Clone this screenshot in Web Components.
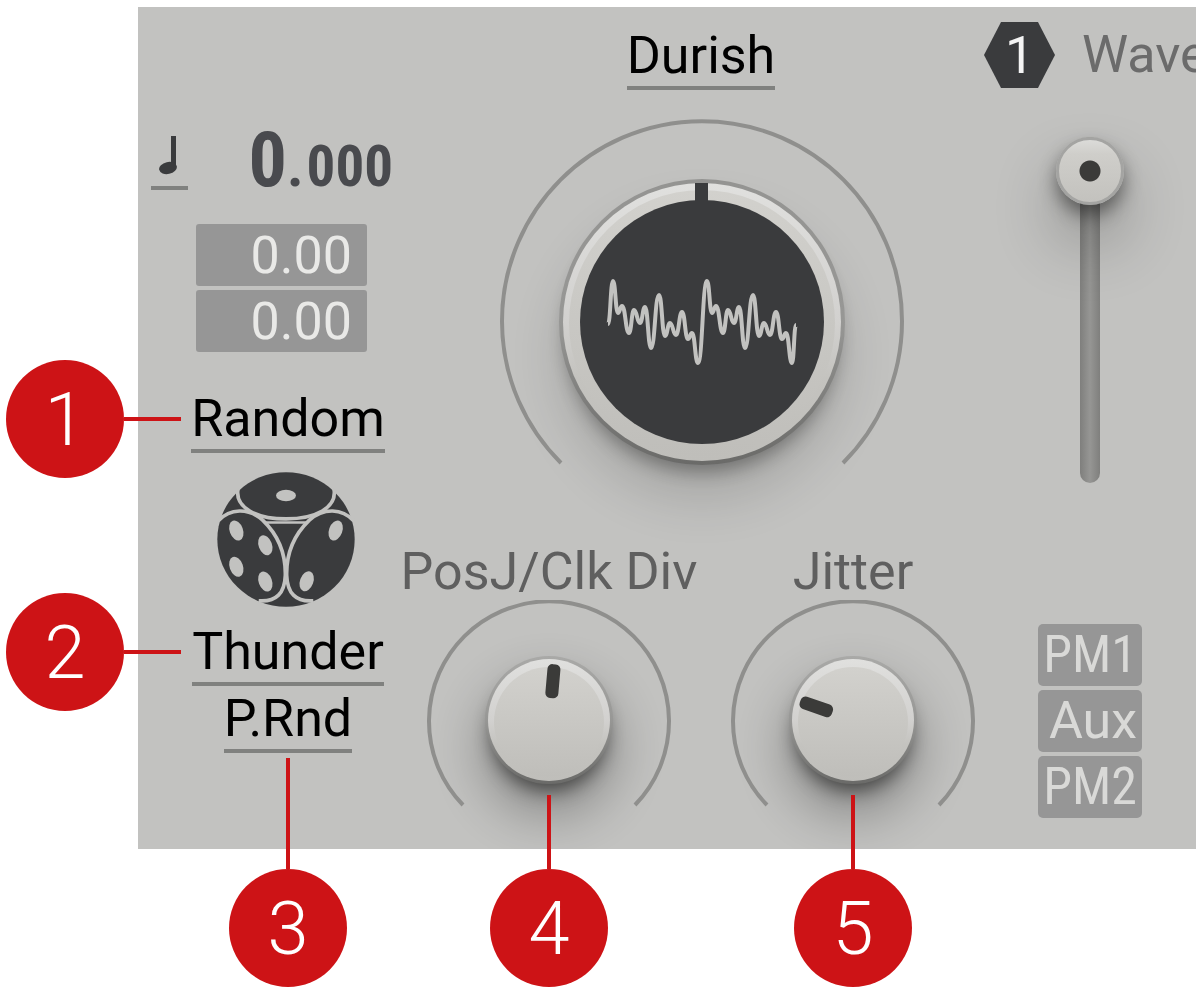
<!DOCTYPE html>
<html lang="en">
<head>
<meta charset="utf-8">
<title>Oscillator panel</title>
<style>
  body {
    margin: 0;
    padding: 7px 8px 143px 138px;
    background: #fff;
    font-family: Roboto, "Liberation Sans", sans-serif;
    font-size: 52px;
    color: #000;
  }
</style>
</head>
<body>
<osc-panel></osc-panel>

<script>
function define(name, html, setup) {
  const template = document.createElement('template');
  template.innerHTML = html;

  window.customElements.define(name, class extends HTMLElement {
    constructor() {
      super();
      this.attachShadow({ mode: 'open' });
      this.shadowRoot.appendChild(template.content.cloneNode(true));
    }

    connectedCallback() {
      if (setup) setup(this, this.shadowRoot);
    }
  });
}

// Underlined text that opens a menu
define('menu-button', `
  <style>
    :host {
      display: block;
    }

    button {
      display: block;
      margin: 0 auto;
      padding: 0;
      border: 0;
      border-bottom: 4px solid #80817f;
      background: none;
      font: inherit;
      line-height: 60px;
      color: #000;
      white-space: nowrap;
    }
  </style>
  <button aria-haspopup="menu"><slot></slot></button>
`);

// Numbered red disc with a leader line, side="left" or side="bottom"
define('call-out', `
  <style>
    :host {
      position: absolute;
      display: flex;
      align-items: center;
    }

    :host([side="left"]) {
      top: 30px;
      right: calc(100% + 9px);
      transform: translateY(-50%);
    }

    :host([side="bottom"]) {
      flex-direction: column-reverse;
      left: 50%;
      top: var(--call-out-top, calc(100% + 5px));
      transform: translateX(-50%);
    }

    .disc {
      width: 118px;
      height: 118px;
      border-radius: 50%;
      background: #cd1316;
      color: #fff;
      font-size: 74px;
      font-weight: 300;
      line-height: 120px;
      text-align: center;
    }

    .line {
      width: 57px;
      height: 4px;
      background: #cd1316;
    }

    :host([side="bottom"]) .line {
      width: 4px;
      height: var(--call-out-line, 111px);
    }
  </style>
  <div class="disc"><slot></slot></div>
  <div class="line"></div>
`);

define('time-readout', `
  <style>
    :host {
      display: flex;
      justify-content: space-between;
      height: 60px;
    }

    button {
      display: flex;
      justify-content: center;
      width: 37px;
      padding: 6px 4px 0 0;
      border: 0;
      border-bottom: 4px solid #80817f;
      background: none;
    }

    output {
      font-family: "Roboto Condensed", "Liberation Sans Narrow", Roboto, sans-serif;
      font-size: 57px;
      font-weight: 700;
      line-height: 60px;
      color: #494a4e;
      white-space: nowrap;
    }

    .whole {
      font-size: 76px;
    }

    .decimals {
      margin-left: 3px;
    }
  </style>
  <button aria-label="Note value">
    <svg width="20" height="40" viewBox="0 0 20 40" fill="#3a3b3d">
      <path d="M13 0h5v33h-5z"/>
      <ellipse cx="10" cy="32" rx="9" ry="6" transform="rotate(-12 10 32)"/>
    </svg>
  </button>
  <output><span class="whole">0</span>.<span class="decimals">000</span></output>
`);

define('value-field', `
  <style>
    :host {
      display: block;
    }

    input {
      display: block;
      box-sizing: border-box;
      width: 171px;
      height: 62px;
      padding: 0 15px 0 0;
      border: 0;
      border-radius: 3px;
      background: #969696;
      color: #e9e9e7;
      font: inherit;
      text-align: right;
    }
  </style>
  <input type="text" inputmode="decimal">
`, (host, root) => {
  const input = root.querySelector('input');
  input.value = host.getAttribute('value');
  input.setAttribute('aria-label', host.getAttribute('label'));
});

define('dice-button', `
  <style>
    :host {
      display: flex;
      justify-content: center;
    }

    button {
      padding: 0;
      border: 0;
      background: none;
    }

    svg {
      display: block;
    }
  </style>
  <button aria-label="Roll">
    <svg width="138" height="135" viewBox="651 366 414 404">
      <ellipse cx="858" cy="568" rx="206" ry="202" fill="#3a3b3d"/>
      <g fill="none" stroke="#c2c2c0" stroke-width="11">
        <path d="M714 416C704 473 770 506 858 506S1012 473 1002 416"/>
        <path d="M798 517H918" stroke-width="7"/>
        <path d="M655 512C690 474 745 472 788 510C840 560 857 620 856 675C854 728 830 756 776 752"/>
        <path d="M1061 512C1026 474 971 472 928 510C876 560 859 620 860 675C862 728 886 756 940 752"/>
      </g>
      <g fill="#c2c2c0">
        <ellipse cx="858" cy="436" rx="30" ry="17"/>
        <ellipse cx="709" cy="541" rx="20" ry="31" transform="rotate(-20 709 541)"/>
        <ellipse cx="796" cy="585" rx="20" ry="31" transform="rotate(-20 796 585)"/>
        <ellipse cx="709" cy="650" rx="20" ry="31" transform="rotate(-20 709 650)"/>
        <ellipse cx="796" cy="694" rx="20" ry="31" transform="rotate(-20 796 694)"/>
        <ellipse cx="1007" cy="541" rx="20" ry="31" transform="rotate(20 1007 541)"/>
        <ellipse cx="920" cy="693" rx="20" ry="31" transform="rotate(20 920 693)"/>
      </g>
    </svg>
  </button>
`);

// Shared by both knobs: the real slider lies invisible over the drawing
const knobStyle = `
  :host {
    position: relative;
    display: block;
  }

  svg {
    display: block;
    width: 100%;
  }

  input {
    position: absolute;
    inset: 0;
    width: 100%;
    height: 100%;
    margin: 0;
    opacity: 0;
  }
`;

const knobDefs = `
  <defs>
    <linearGradient id="cap" x1="0" y1="0" x2="0" y2="1">
      <stop offset="0" stop-color="#d2d1cd"/>
      <stop offset="1" stop-color="#bfbeba"/>
    </linearGradient>
    <linearGradient id="shine" x1="0" y1="0" x2="0" y2="1">
      <stop offset="0" stop-color="#e0e0de"/>
      <stop offset="0.5" stop-color="#d2d1cf"/>
      <stop offset="0.7" stop-color="#c4c3bf"/>
      <stop offset="1" stop-color="#bfbeba"/>
    </linearGradient>
    <linearGradient id="rim" x1="0" y1="0" x2="0" y2="1">
      <stop offset="0" stop-color="var(--rim, #a9a9a7)"/>
      <stop offset="0.5" stop-color="#979795"/>
      <stop offset="1" stop-color="#6a6a68"/>
    </linearGradient>
    <filter id="near" x="-50%" y="-50%" width="200%" height="200%">
      <feGaussianBlur stdDeviation="9"/>
    </filter>
    <filter id="far" x="-80%" y="-80%" width="260%" height="260%">
      <feGaussianBlur stdDeviation="26"/>
    </filter>
  </defs>
`;

define('wave-dial', `
  <style>
    ${knobStyle}

    svg {
      --rim: #949492;
      height: 454px;
    }
  </style>
  <svg viewBox="-301 -232 600 454">
    ${knobDefs}
    <circle cy="34" r="142" opacity="0.14" filter="url(#far)"/>
    <circle cy="14" r="136" opacity="0.32" filter="url(#near)"/>
    <path d="M-141 141A200 200 0 1 1 141 141" fill="none" stroke="#8f8f8d" stroke-width="4"/>
    <circle r="143" fill="url(#rim)"/>
    <circle r="139" fill="url(#shine)"/>
    <circle cy="1" r="133" fill="url(#cap)"/>
    <circle r="122" fill="#3a3b3d"/>
    <path d="M-7 -139H6V-118H-7z" fill="#3a3b3d"/>
    <path class="wave" fill="none" stroke="#c2c2c0" stroke-width="4"/>
  </svg>
  <input type="range" min="0" max="100" value="50" aria-label="Wave position">
`, (host, root) => {
  // peaks and dips of one cycle, drawn twice
  const cycle = [
    [-89, -41], [-84, -9], [-80, -16], [-73, 11], [-68, -12], [-62, 1],
    [-57, -15], [-51, 26], [-43, -27], [-37, 14], [-32, 1], [-26, 13],
    [-20, -10], [-14, 17], [-10, 11], [-4, 41]
  ];
  const points = cycle.concat(cycle.map(([x, y]) => [x + 94, y]), [[94, 3]]);
  let [px, py] = [-94, 2];
  let d = `M${px} ${py}`;
  for (const [x, y] of points) {
    const mid = (px + x) / 2;
    d += `C${mid} ${py} ${mid} ${y} ${x} ${y}`;
    [px, py] = [x, y];
  }
  root.querySelector('.wave').setAttribute('d', d);
});

define('turn-knob', `
  <style>
    ${knobStyle}

    label {
      display: block;
      line-height: 56px;
      text-align: center;
      white-space: nowrap;
      color: #5f5f5f;
    }

    svg {
      height: 249px;
    }
  </style>
  <label for="knob"></label>
  <svg viewBox="-150 -120 300 249">
    ${knobDefs}
    <circle cy="28" r="66" opacity="0.3" filter="url(#far)"/>
    <circle cy="13" r="58" opacity="0.5" filter="url(#near)"/>
    <path d="M-86 85A120 120 0 1 1 86 85" fill="none" stroke="#8f8f8d" stroke-width="4"/>
    <circle r="64" fill="url(#rim)"/>
    <circle r="61" fill="url(#shine)"/>
    <circle cy="2" r="55" fill="url(#cap)"/>
    <rect class="mark" x="-6" y="-56" width="13" height="34" rx="5" fill="#3b3b39"/>
  </svg>
  <input id="knob" type="range" min="0" max="100">
  <slot></slot>
`, (host, root) => {
  root.querySelector('label').textContent = host.getAttribute('label');
  root.querySelector('.mark').setAttribute('transform', `rotate(${host.getAttribute('angle')})`);
});

define('channel-title', `
  <style>
    :host {
      display: flex;
      align-items: center;
      gap: 27px;
      overflow: hidden;
      line-height: 64px;
      color: #6b6b6b;
    }

    .number {
      flex: none;
      width: 71px;
      height: 66px;
      background: #3a3b3d;
      clip-path: polygon(24% 0, 76% 0, 100% 50%, 76% 100%, 24% 100%, 0 50%);
      color: #f4f4f4;
      line-height: 68px;
      text-align: center;
    }
  </style>
  <div class="number"><slot name="number"></slot></div>
  <slot></slot>
`);

define('level-fader', `
  <style>
    :host {
      display: flex;
      justify-content: center;
    }

    input {
      appearance: none;
      writing-mode: vertical-lr;
      direction: rtl;
      width: 20px;
      height: 346px;
      margin: 0;
      border-radius: 10px;
      background: linear-gradient(90deg, #7f7f7d, #969694 50%, #7f7f7d);
    }

    input::-webkit-slider-thumb {
      appearance: none;
      box-sizing: border-box;
      width: 68px;
      height: 68px;
      margin-left: -24px;
      margin-right: -24px;
      border: 3px solid #a4a4a2;
      border-radius: 50%;
      background:
        radial-gradient(circle, #3b3b39 10px, transparent 11px),
        linear-gradient(#dededc, #cfceca 25%, #c2c1bd);
      background-origin: border-box;
      box-shadow: 0 10px 18px rgba(0, 0, 0, 0.45), 0 36px 64px rgba(0, 0, 0, 0.3);
    }
  </style>
  <input type="range" min="0" max="100" value="100" aria-label="Wave">
`);

define('mod-button', `
  <style>
    :host {
      display: block;
    }

    button {
      display: block;
      width: 104px;
      height: 62px;
      padding: 0 5px 0 0;
      border: 0;
      border-radius: 5px;
      background: #969696;
      color: #d9d9d7;
      font: inherit;
      line-height: 62px;
      text-align: right;
    }

    :host([narrow]) button {
      font-family: "Roboto Condensed", "Liberation Sans Narrow", sans-serif;
    }
  </style>
  <button><slot></slot></button>
`);

define('osc-panel', `
  <style>
    :host {
      display: grid;
      grid-template-columns: 259px 1fr 191px;
      min-height: 842px;
      background: #c2c2c0;
    }

    .random {
      padding: 123px 4px 0 13px;
    }

    .fields {
      display: grid;
      gap: 4px;
      margin: 34px 0 37px 45px;
    }

    .menus {
      width: 196px;
      margin-left: 39px;
    }

    .anchor {
      position: relative;
    }

    dice-button {
      margin: 19px 4px 15px 0;
    }

    .anchor + .anchor {
      margin-top: 3px;
    }

    .main {
      padding-top: 19px;
    }

    .knobs {
      display: grid;
      grid-template-columns: 1fr 1fr;
    }

    .knobs call-out {
      --call-out-top: 251px;
      --call-out-line: 74px;
    }

    .level {
      padding-top: 15px;
    }

    channel-title {
      margin-left: -21px;
    }

    .strip {
      display: flex;
      flex-direction: column;
      align-items: center;
      gap: 4px;
      margin-right: 21px;
    }

    level-fader {
      margin: 49px 0 137px;
    }
  </style>

  <section class="random">
    <time-readout></time-readout>
    <div class="fields">
      <value-field value="0.00" label="Delay"></value-field>
      <value-field value="0.00" label="Offset"></value-field>
    </div>
    <div class="menus">
      <div class="anchor">
        <menu-button>Random</menu-button>
        <call-out side="left">1</call-out>
      </div>
      <dice-button></dice-button>
      <div class="anchor">
        <menu-button>Thunder</menu-button>
        <call-out side="left">2</call-out>
      </div>
      <div class="anchor">
        <menu-button>P.Rnd</menu-button>
        <call-out side="bottom">3</call-out>
      </div>
    </div>
  </section>

  <section class="main">
    <menu-button>Durish</menu-button>
    <wave-dial></wave-dial>
    <div class="knobs">
      <turn-knob label="PosJ/Clk Div" angle="5">
        <call-out side="bottom">4</call-out>
      </turn-knob>
      <turn-knob label="Jitter" angle="-71">
        <call-out side="bottom">5</call-out>
      </turn-knob>
    </div>
  </section>

  <section class="level">
    <channel-title><span slot="number">1</span>Wave</channel-title>
    <div class="strip">
      <level-fader></level-fader>
      <mod-button narrow>PM1</mod-button>
      <mod-button>Aux</mod-button>
      <mod-button narrow>PM2</mod-button>
    </div>
  </section>
`);
</script>
</body>
</html>
